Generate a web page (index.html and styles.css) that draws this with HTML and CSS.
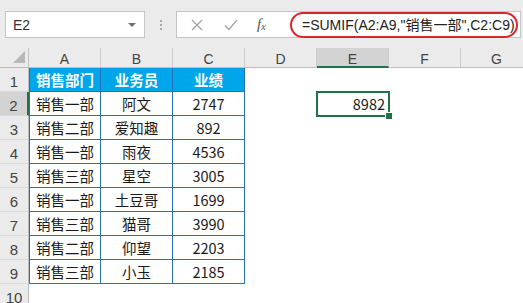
FILE: index.html
```html
<!DOCTYPE html>
<html lang="zh">
<head>
<meta charset="utf-8">
<link rel="stylesheet" href="styles.css">
</head>
<body>
<div class="app">
  <div class="toolbar">
    <div class="namebox"><span>E2</span><span class="caret"></span></div>
    <div class="grip"><i></i><i></i><i></i></div>
    <div class="fbox">
      <div class="fbtns">
        <svg class="ico" width="14" height="14" viewBox="0 0 14 14"><path d="M2 2 L12 12 M12 2 L2 12" stroke="#a6a6a6" stroke-width="1.4" fill="none"/></svg>
        <svg class="ico" width="16" height="14" viewBox="0 0 16 14"><path d="M2 7.5 L6 11.5 L14 2" stroke="#a6a6a6" stroke-width="1.4" fill="none"/></svg>
        <span class="fx">f<sub>x</sub></span>
      </div>
      <div class="formula">=SUMIF(A2:A9,"销售一部",C2:C9)</div>
    </div>
  </div>
  <div class="sheet">
    <div class="corner"><span class="tri"></span></div>
    <div class="ch">A</div><div class="ch">B</div><div class="ch">C</div><div class="ch">D</div><div class="ch sel">E</div><div class="ch">F</div><div class="ch">G</div>

    <div class="rh">1</div>
    <div class="c t th tl tt">销售部门</div><div class="c t th tt">业务员</div><div class="c t th tt">业绩</div><div class="c"></div><div class="c"></div><div class="c"></div><div class="c"></div>

    <div class="rh sel">2</div>
    <div class="c t tl">销售一部</div><div class="c t">阿文</div><div class="c t">2747</div><div class="c"></div><div class="c active">8982</div><div class="c"></div><div class="c"></div>

    <div class="rh">3</div>
    <div class="c t tl">销售二部</div><div class="c t">爱知趣</div><div class="c t">892</div><div class="c"></div><div class="c"></div><div class="c"></div><div class="c"></div>

    <div class="rh">4</div>
    <div class="c t tl">销售一部</div><div class="c t">雨夜</div><div class="c t">4536</div><div class="c"></div><div class="c"></div><div class="c"></div><div class="c"></div>

    <div class="rh">5</div>
    <div class="c t tl">销售三部</div><div class="c t">星空</div><div class="c t">3005</div><div class="c"></div><div class="c"></div><div class="c"></div><div class="c"></div>

    <div class="rh">6</div>
    <div class="c t tl">销售一部</div><div class="c t">土豆哥</div><div class="c t">1699</div><div class="c"></div><div class="c"></div><div class="c"></div><div class="c"></div>

    <div class="rh">7</div>
    <div class="c t tl">销售三部</div><div class="c t">猫哥</div><div class="c t">3990</div><div class="c"></div><div class="c"></div><div class="c"></div><div class="c"></div>

    <div class="rh">8</div>
    <div class="c t tl">销售二部</div><div class="c t">仰望</div><div class="c t">2203</div><div class="c"></div><div class="c"></div><div class="c"></div><div class="c"></div>

    <div class="rh">9</div>
    <div class="c t tl">销售三部</div><div class="c t">小玉</div><div class="c t">2185</div><div class="c"></div><div class="c"></div><div class="c"></div><div class="c"></div>

    <div class="rh">10</div>
    <div class="c"></div><div class="c"></div><div class="c"></div><div class="c"></div><div class="c"></div><div class="c"></div><div class="c"></div>
  </div>
</div>
</body>
</html>
```

FILE: styles.css
```css
* { box-sizing: border-box; }
html, body { margin: 0; padding: 0; background: #fff; }
body { width: 523px; height: 303px; overflow: hidden; font-family: "Noto Sans CJK SC", "Noto Sans", sans-serif; color: #222; }
.app { width: 523px; height: 303px; overflow: hidden; }

.toolbar { height: 48px; background: #ebebeb; display: flex; align-items: flex-start; padding: 11px 0 0 5px; }
.namebox { width: 140px; height: 27px; background: #fff; border: 1px solid #c6c6c6; display: flex; align-items: center; justify-content: space-between; padding: 0 8px 0 7px; font-family: "Liberation Sans", sans-serif; font-size: 14px; color: #333; }
.caret { width: 0; height: 0; border-left: 4px solid transparent; border-right: 4px solid transparent; border-top: 4px solid #6e6e6e; }
.grip { width: 31px; height: 27px; display: flex; flex-direction: column; align-items: center; justify-content: center; gap: 2px; }
.grip i { display: block; width: 2px; height: 2px; background: #a8a8a8; }
.fbox { width: 345px; height: 27px; background: #fff; border: 1px solid #c6c6c6; display: flex; align-items: center; }
.fbtns { width: 113px; display: flex; align-items: center; padding-left: 13px; }
.fbtns .ico:first-child { margin-right: 19px; }
.fbtns .ico:nth-child(2) { margin-right: 18px; }
.fx { font-family: "Liberation Serif", serif; font-style: italic; font-size: 15px; color: #555; }
.fx sub { font-size: 10px; vertical-align: -1px; }
.formula { width: 228px; height: 26px; border: 2px solid #e0242b; border-radius: 13px; font-family: "Liberation Sans", "Noto Sans CJK SC", sans-serif; font-size: 14px; color: #222; padding-left: 10px; line-height: 23px; white-space: nowrap; }

.sheet { display: grid; grid-template-columns: 29px repeat(7, 72px); grid-template-rows: 20px repeat(10, 24px); }
.corner { background: #ebebeb; border-right: 1px solid #c2c2c2; border-bottom: 1px solid #bdbdbd; position: relative; }
.tri { position: absolute; right: 3px; bottom: 4px; width: 0; height: 0; border-left: 12px solid transparent; border-bottom: 12px solid #b8b8b8; }
.ch { background: #ebebeb; border-right: 1px solid #cdcdcd; border-bottom: 1px solid #bdbdbd; font-family: "Liberation Sans", sans-serif; font-size: 14px; color: #444; text-align: center; line-height: 22px; }
.ch.sel { background: #d3d3d3; border-bottom: 2px solid #217346; }
.rh { background: #ebebeb; border-right: 1px solid #bdbdbd; border-bottom: 1px solid #d9d9d9; font-family: "Liberation Sans", sans-serif; font-size: 15px; color: #444; text-align: center; padding-top: 5px; line-height: 18px; }
.rh.sel { background: #d3d3d3; border-right: 2px solid #217346; }

.c { font-size: 14.5px; line-height: 23px; text-align: center; white-space: nowrap; color: #1a1a1a; }
.t { border-right: 1px solid #2a70b8; border-bottom: 1px solid #2a70b8; }
.tl { border-left: 1px solid #2a70b8; }
.th { background: #00a6ea; color: #fff; font-weight: bold; }
.active { position: relative; text-align: right; padding-right: 4px; outline: 2px solid #217346; outline-offset: -1px; }
.active::after { content: ""; position: absolute; right: -4px; bottom: -4px; width: 6px; height: 6px; background: #217346; border: 1px solid #fff; }
```
